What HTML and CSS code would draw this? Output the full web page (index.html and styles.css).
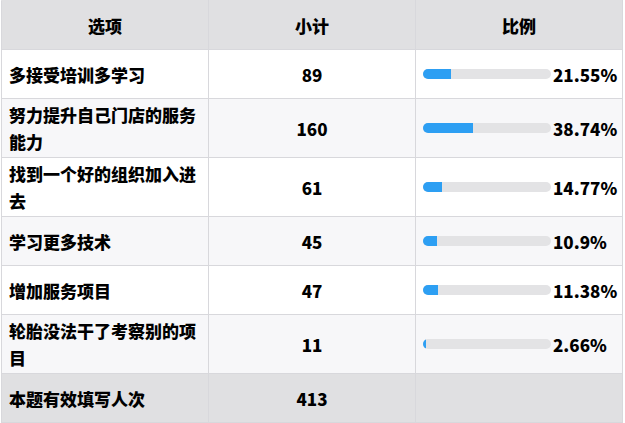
FILE: index.html
```html
<!DOCTYPE html>
<html lang="zh">
<head>
<meta charset="utf-8">
<link rel="stylesheet" href="styles.css">
</head>
<body>
<table class="stats">
  <colgroup><col class="c1"><col class="c2"><col class="c3"></colgroup>
  <thead>
    <tr><th>选项</th><th>小计</th><th>比例</th></tr>
  </thead>
  <tbody>
    <tr><td class="opt">多接受培训多学习</td><td class="num">89</td><td class="pct"><div class="pbox"><div class="bar"><div class="fill" style="width:21.55%"></div></div><span class="val">21.55%</span></div></td></tr>
    <tr class="alt"><td class="opt">努力提升自己门店的服务能力</td><td class="num">160</td><td class="pct"><div class="pbox"><div class="bar"><div class="fill" style="width:38.74%"></div></div><span class="val">38.74%</span></div></td></tr>
    <tr><td class="opt">找到一个好的组织加入进去</td><td class="num">61</td><td class="pct"><div class="pbox"><div class="bar"><div class="fill" style="width:14.77%"></div></div><span class="val">14.77%</span></div></td></tr>
    <tr class="alt"><td class="opt">学习更多技术</td><td class="num">45</td><td class="pct"><div class="pbox"><div class="bar"><div class="fill" style="width:10.9%"></div></div><span class="val">10.9%</span></div></td></tr>
    <tr><td class="opt">增加服务项目</td><td class="num">47</td><td class="pct"><div class="pbox"><div class="bar"><div class="fill" style="width:11.38%"></div></div><span class="val">11.38%</span></div></td></tr>
    <tr class="alt"><td class="opt">轮胎没法干了考察别的项目</td><td class="num">11</td><td class="pct"><div class="pbox"><div class="bar"><div class="fill" style="width:2.66%"></div></div><span class="val">2.66%</span></div></td></tr>
  </tbody>
  <tfoot>
    <tr><td class="opt">本题有效填写人次</td><td class="num">413</td><td></td></tr>
  </tfoot>
</table>
</body>
</html>
```

FILE: styles.css
```css
html, body {
  margin: 0;
  padding: 0;
  background: #ffffff;
}
body {
  padding: 0 0 0 1px;
  font-family: "Noto Sans CJK SC", "Noto Sans", sans-serif;
  font-weight: 900;
  font-size: 17px;
  color: #000;
}
.stats {
  border-collapse: collapse;
  table-layout: fixed;
  width: 622px;
}
.c1, .c2, .c3 { width: 33.33%; }
.stats th, .stats td {
  border: 1px solid #d8d8dc;
  padding: 2px 7px;
  line-height: 27px;
  vertical-align: middle;
  height: 44px;
  box-sizing: border-box;
}
.stats tr { height: 49px; }
.stats thead th {
  background: #e0e0e2;
  text-align: center;
  font-weight: 900;
  border-top-color: #e0e0e2;
}
.stats tbody tr { background: #ffffff; }
.stats tbody tr.alt { background: #f7f7f9; }
.stats tfoot td {
  background: #e0e0e2;
}
.opt { text-align: left; }
.num { text-align: center; }
.pct { padding-left: 6px; padding-right: 8px; }
.pbox {
  display: flex;
  align-items: center;
}
.bar {
  width: 128px;
  height: 10px;
  flex: none;
  border-radius: 5px;
  background: #e3e3e5;
  overflow: hidden;
}
.fill {
  height: 100%;
  background: #2d9ff3;
}
.val {
  margin-left: 2px;
  white-space: nowrap;
}
```
